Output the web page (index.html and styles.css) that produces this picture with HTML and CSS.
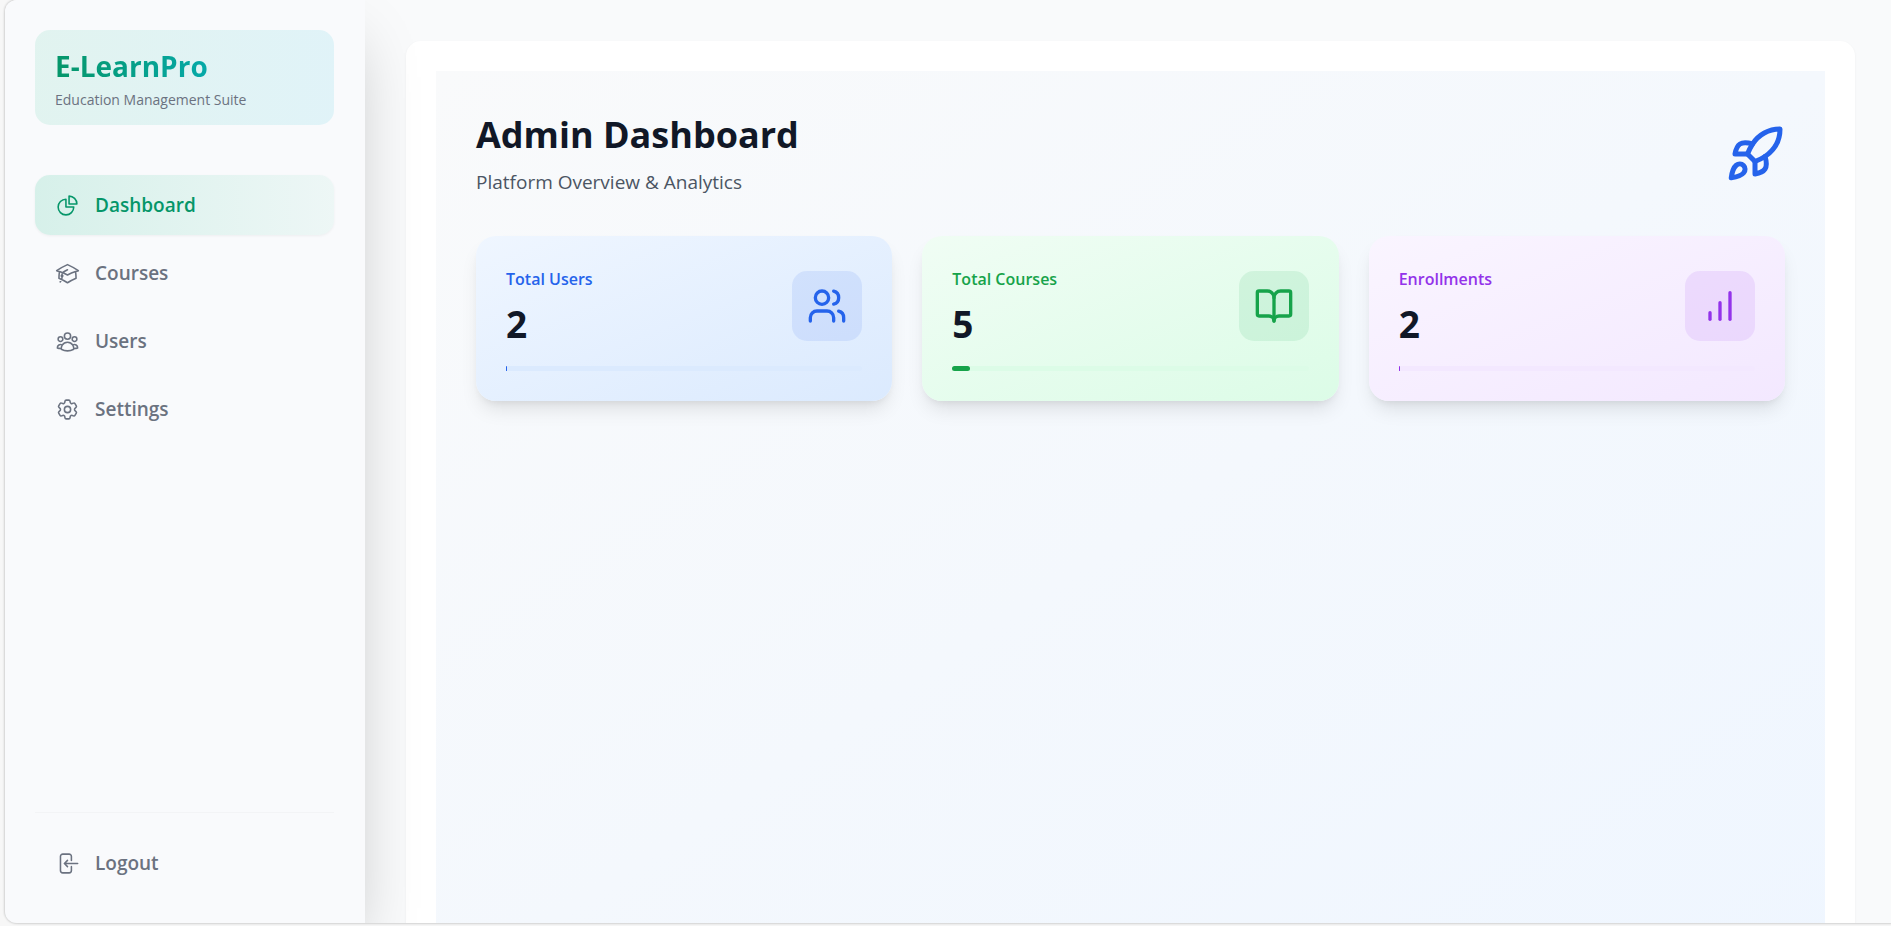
FILE: index.html
```html
<!DOCTYPE html>
<html lang="en">
<head>
  <meta charset="utf-8">
  <title>E-LearnPro – Admin Dashboard</title>
  <link rel="stylesheet" href="styles.css">
</head>
<body>
  <div class="frame">
    <aside class="sidebar">
      <div class="brand">
        <div class="brand-name">E-LearnPro</div>
        <div class="brand-tagline">Education Management Suite</div>
      </div>
      <nav class="nav" aria-label="Main">
        <a class="nav-item active" href="#dashboard" aria-current="page">
          <svg class="nav-icon" viewBox="0 0 24 24" aria-hidden="true"><path d="M10.5 6a7.5 7.5 0 1 0 7.5 7.5h-7.5V6Z"/><path d="M13.5 10.5H21A7.5 7.5 0 0 0 13.5 3v7.5Z"/></svg>
          <span>Dashboard</span>
        </a>
        <a class="nav-item" href="#courses">
          <svg class="nav-icon" viewBox="0 0 24 24" aria-hidden="true"><path d="M4.26 10.147a60.438 60.438 0 0 0-.491 6.347A48.62 48.62 0 0 1 12 20.904a48.62 48.62 0 0 1 8.232-4.41 60.46 60.46 0 0 0-.491-6.347m-15.482 0a50.636 50.636 0 0 0-2.658-.813A59.906 59.906 0 0 1 12 3.493a59.903 59.903 0 0 1 10.399 5.84c-.896.248-1.783.52-2.658.814m-15.482 0A50.717 50.717 0 0 1 12 13.489a50.702 50.702 0 0 1 7.74-3.342M6.75 15a.75.75 0 1 0 0-1.5.75.75 0 0 0 0 1.5Zm0 0v-3.675A55.378 55.378 0 0 1 12 8.443m-7.007 11.55A5.981 5.981 0 0 0 6.75 15.75v-1.5"/></svg>
          <span>Courses</span>
        </a>
        <a class="nav-item" href="#users">
          <svg class="nav-icon" viewBox="0 0 24 24" aria-hidden="true"><path d="M18 18.72a9.094 9.094 0 0 0 3.741-.479 3 3 0 0 0-4.682-2.72m.94 3.198.001.031c0 .225-.012.447-.037.666A11.944 11.944 0 0 1 12 21c-2.17 0-4.207-.576-5.963-1.584A6.062 6.062 0 0 1 6 18.719m12 0a5.971 5.971 0 0 0-.941-3.197m0 0A5.995 5.995 0 0 0 12 12.75a5.995 5.995 0 0 0-5.058 2.772m0 0a3 3 0 0 0-4.681 2.72 8.986 8.986 0 0 0 3.74.477m.94-3.197a5.971 5.971 0 0 0-.94 3.197M15 6.75a3 3 0 1 1-6 0 3 3 0 0 1 6 0Zm6 3a2.25 2.25 0 1 1-4.5 0 2.25 2.25 0 0 1 4.5 0Zm-13.5 0a2.25 2.25 0 1 1-4.5 0 2.25 2.25 0 0 1 4.5 0Z"/></svg>
          <span>Users</span>
        </a>
        <a class="nav-item" href="#settings">
          <svg class="nav-icon" viewBox="0 0 24 24" aria-hidden="true"><path d="M9.594 3.94c.09-.542.56-.94 1.11-.94h2.593c.55 0 1.02.398 1.11.94l.213 1.281c.063.374.313.686.645.87.074.04.147.083.22.127.325.196.72.257 1.075.124l1.217-.456a1.125 1.125 0 0 1 1.37.49l1.296 2.247a1.125 1.125 0 0 1-.26 1.431l-1.003.827c-.293.241-.438.613-.43.992a7.723 7.723 0 0 1 0 .255c-.008.378.137.75.43.991l1.004.827c.424.35.534.955.26 1.43l-1.298 2.247a1.125 1.125 0 0 1-1.369.491l-1.217-.456c-.355-.133-.75-.072-1.076.124a6.47 6.47 0 0 1-.22.128c-.331.183-.581.495-.644.869l-.213 1.281c-.09.543-.56.94-1.11.94h-2.594c-.55 0-1.019-.398-1.11-.94l-.213-1.281c-.062-.374-.312-.686-.644-.87a6.52 6.52 0 0 1-.22-.127c-.325-.196-.72-.257-1.076-.124l-1.217.456a1.125 1.125 0 0 1-1.369-.49l-1.297-2.247a1.125 1.125 0 0 1 .26-1.431l1.004-.827c.292-.24.437-.613.43-.991a6.932 6.932 0 0 1 0-.255c.007-.38-.138-.751-.43-.992l-1.004-.827a1.125 1.125 0 0 1-.26-1.43l1.297-2.247a1.125 1.125 0 0 1 1.37-.491l1.216.456c.356.133.751.072 1.076-.124.072-.044.146-.086.22-.128.332-.183.582-.495.644-.869l.214-1.28Z"/><path d="M15 12a3 3 0 1 1-6 0 3 3 0 0 1 6 0Z"/></svg>
          <span>Settings</span>
        </a>
      </nav>
      <div class="sidebar-footer">
        <button class="nav-item" type="button">
          <svg class="nav-icon" viewBox="0 0 24 24" aria-hidden="true"><path d="M15.75 9V5.25A2.25 2.25 0 0 0 13.5 3h-6a2.25 2.25 0 0 0-2.25 2.25v13.5A2.25 2.25 0 0 0 7.5 21h6a2.25 2.25 0 0 0 2.25-2.25V15M12 9l-3 3m0 0 3 3m-3-3h12.75"/></svg>
          <span>Logout</span>
        </button>
      </div>
    </aside>

    <main class="main">
      <div class="panel">
        <div class="board">
          <header class="board-header">
            <div>
              <h1 class="title">Admin Dashboard</h1>
              <p class="subtitle">Platform Overview &amp; Analytics</p>
            </div>
            <svg class="rocket" viewBox="0 0 24 24" aria-hidden="true"><path d="M4.5 16.5c-1.5 1.26-2 5-2 5s3.74-.5 5-2c.71-.84.7-2.13-.09-2.91a2.18 2.18 0 0 0-2.91-.09z"/><path d="m12 15-3-3a22 22 0 0 1 2-3.95A12.88 12.88 0 0 1 22 2c0 2.72-.78 7.5-6 11a22.35 22.35 0 0 1-4 2z"/><path d="M9 12H4s.55-3.03 2-4c1.62-1.08 5 0 5 0"/><path d="M12 15v5s3.03-.55 4-2c1.08-1.62 0-5 0-5"/></svg>
          </header>

          <section class="stats" aria-label="Platform statistics">
            <article class="stat stat-blue">
              <div class="stat-top">
                <div>
                  <h2 class="stat-label" id="stat-users">Total Users</h2>
                  <p class="stat-value">2</p>
                </div>
                <div class="stat-badge">
                  <svg class="stat-icon" viewBox="0 0 24 24" aria-hidden="true"><path d="M16 21v-2a4 4 0 0 0-4-4H6a4 4 0 0 0-4 4v2"/><circle cx="9" cy="7" r="4"/><path d="M22 21v-2a4 4 0 0 0-3-3.87"/><path d="M16 3.13a4 4 0 0 1 0 7.75"/></svg>
                </div>
              </div>
              <div class="meter" role="progressbar" aria-labelledby="stat-users" aria-valuenow="2" aria-valuemin="0" aria-valuemax="1000"><div class="meter-fill" style="width: 0.2%"></div></div>
            </article>

            <article class="stat stat-green">
              <div class="stat-top">
                <div>
                  <h2 class="stat-label" id="stat-courses">Total Courses</h2>
                  <p class="stat-value">5</p>
                </div>
                <div class="stat-badge">
                  <svg class="stat-icon" viewBox="0 0 24 24" aria-hidden="true"><path d="M12 7v14"/><path d="M3 18a1 1 0 0 1-1-1V4a1 1 0 0 1 1-1h5a4 4 0 0 1 4 4 4 4 0 0 1 4-4h5a1 1 0 0 1 1 1v13a1 1 0 0 1-1 1h-6a3 3 0 0 0-3 3 3 3 0 0 0-3-3z"/></svg>
                </div>
              </div>
              <div class="meter" role="progressbar" aria-labelledby="stat-courses" aria-valuenow="5" aria-valuemin="0" aria-valuemax="100"><div class="meter-fill" style="width: 5%"></div></div>
            </article>

            <article class="stat stat-purple">
              <div class="stat-top">
                <div>
                  <h2 class="stat-label" id="stat-enrollments">Enrollments</h2>
                  <p class="stat-value">2</p>
                </div>
                <div class="stat-badge">
                  <svg class="stat-icon" viewBox="0 0 24 24" aria-hidden="true"><path d="M12 20V10"/><path d="M18 20V4"/><path d="M6 20v-4"/></svg>
                </div>
              </div>
              <div class="meter" role="progressbar" aria-labelledby="stat-enrollments" aria-valuenow="2" aria-valuemin="0" aria-valuemax="1000"><div class="meter-fill" style="width: 0.2%"></div></div>
            </article>
          </section>
        </div>
      </div>
    </main>
  </div>
</body>
</html>
```
FILE: styles.css
```css
*,
*::before,
*::after {
  box-sizing: border-box;
}

body {
  margin: 0;
  padding: 0 0 3px 5px;
  height: 100vh;
  overflow: hidden;
  background: #f7f7f7;
  font-family: "Open Sans", "Noto Sans", sans-serif;
  color: #111827;
}

h1,
h2,
p {
  margin: 0;
}

svg {
  fill: none;
  stroke: currentColor;
  stroke-width: 2;
  stroke-linecap: round;
  stroke-linejoin: round;
  flex-shrink: 0;
}

.frame {
  display: flex;
  height: 100%;
  overflow: hidden;
  background: #f9fafb;
  border-radius: 12px 0 0 12px;
  box-shadow: 0 0 2px 1px rgba(0, 0, 0, 0.15);
}

/* Sidebar */

.sidebar {
  position: relative;
  z-index: 1;
  display: flex;
  flex-direction: column;
  flex: 0 0 360px;
  padding: 30px;
  background: #f9fafc;
  border-right: 1px solid #f9fafc;
  box-shadow: 0 31px 62px -15px rgba(0, 0, 0, 0.25);
}

.brand {
  margin-bottom: 50px;
  padding: 16px 20px 15px;
  border-radius: 15px;
  background: linear-gradient(to right, rgba(16, 185, 129, 0.1), rgba(6, 182, 212, 0.1));
}

.brand-name {
  font-size: 28px;
  line-height: 40px;
  font-weight: 700;
  color: transparent;
  background: linear-gradient(to right, #059669, #06b6d4);
  background-clip: text;
}

.brand-tagline {
  margin-top: 4px;
  font-size: 14px;
  line-height: 20px;
  color: #6b7280;
}

.nav {
  display: flex;
  flex-direction: column;
  gap: 8px;
}

.nav-item {
  display: flex;
  align-items: center;
  gap: 15px;
  width: 100%;
  height: 60px;
  padding: 0 20px;
  border: 0;
  border-radius: 15px;
  background: none;
  font: inherit;
  font-size: 19px;
  font-weight: 600;
  color: #6b7280;
  text-decoration: none;
  cursor: pointer;
}

.nav-item.active {
  color: #059669;
  background: linear-gradient(to right, rgba(16, 185, 129, 0.15), rgba(16, 185, 129, 0.05));
  box-shadow: 0 1px 3px rgba(0, 0, 0, 0.05);
}

.nav-icon {
  width: 25px;
  height: 25px;
  stroke-width: 1.5;
}

.sidebar-footer {
  margin-top: auto;
  padding-top: 20px;
  border-top: 1px solid #f3f4f6;
}

/* Main area */

.main {
  flex: 1;
  min-width: 0;
  padding: 41px 36px 40px 41px;
  overflow-y: auto;
  scrollbar-width: none;
}

.panel {
  padding: 30px;
  border-radius: 15px;
  background: #fff;
  box-shadow: 0 1px 3px rgba(0, 0, 0, 0.05);
}

.board {
  min-height: 100vh;
  padding: 40px;
  background: linear-gradient(to bottom right, #f9fafb, #eff6ff);
}

.board-header {
  display: flex;
  align-items: center;
  justify-content: space-between;
  margin-bottom: 39px;
}

.title {
  font-size: 36px;
  line-height: 48px;
  font-weight: 700;
}

.subtitle {
  margin-top: 8px;
  font-size: 19px;
  line-height: 30px;
  color: #4b5563;
}

.rocket {
  width: 60px;
  height: 60px;
  color: #2563eb;
}

/* Stat cards */

.stats {
  display: grid;
  grid-template-columns: repeat(3, 1fr);
  gap: 30px;
}

.stat {
  padding: 30px;
  border-radius: 20px;
  box-shadow: 0 12px 19px -4px rgba(0, 0, 0, 0.1), 0 5px 8px -5px rgba(0, 0, 0, 0.1);
}

.stat-blue {
  --accent: #2563eb;
  --badge: rgba(37, 99, 235, 0.1);
  --track: #dbeafe;
  background: linear-gradient(to bottom right, #eff6ff, #dbeafe);
}

.stat-green {
  --accent: #16a34a;
  --badge: rgba(22, 163, 74, 0.1);
  --track: #dcfce7;
  background: linear-gradient(to bottom right, #f0fdf4, #dcfce7);
}

.stat-purple {
  --accent: #9333ea;
  --badge: rgba(147, 51, 234, 0.1);
  --track: #f3e8ff;
  background: linear-gradient(to bottom right, #faf5ff, #f3e8ff);
}

.stat-top {
  display: flex;
  align-items: center;
  justify-content: space-between;
}

.stat-label {
  font-size: 16px;
  line-height: 27px;
  font-weight: 600;
  color: var(--accent);
}

.stat-value {
  margin-top: 8px;
  font-size: 37px;
  line-height: 45px;
  font-weight: 700;
}

.stat-badge {
  display: flex;
  padding: 15px;
  border-radius: 15px;
  background: var(--badge);
  color: var(--accent);
}

.stat-icon {
  width: 40px;
  height: 40px;
}

.meter {
  height: 5px;
  margin-top: 20px;
  border-radius: 5px;
  background: var(--track);
}

.meter-fill {
  height: 100%;
  min-width: 1px;
  border-radius: inherit;
  background: var(--accent);
}
```
